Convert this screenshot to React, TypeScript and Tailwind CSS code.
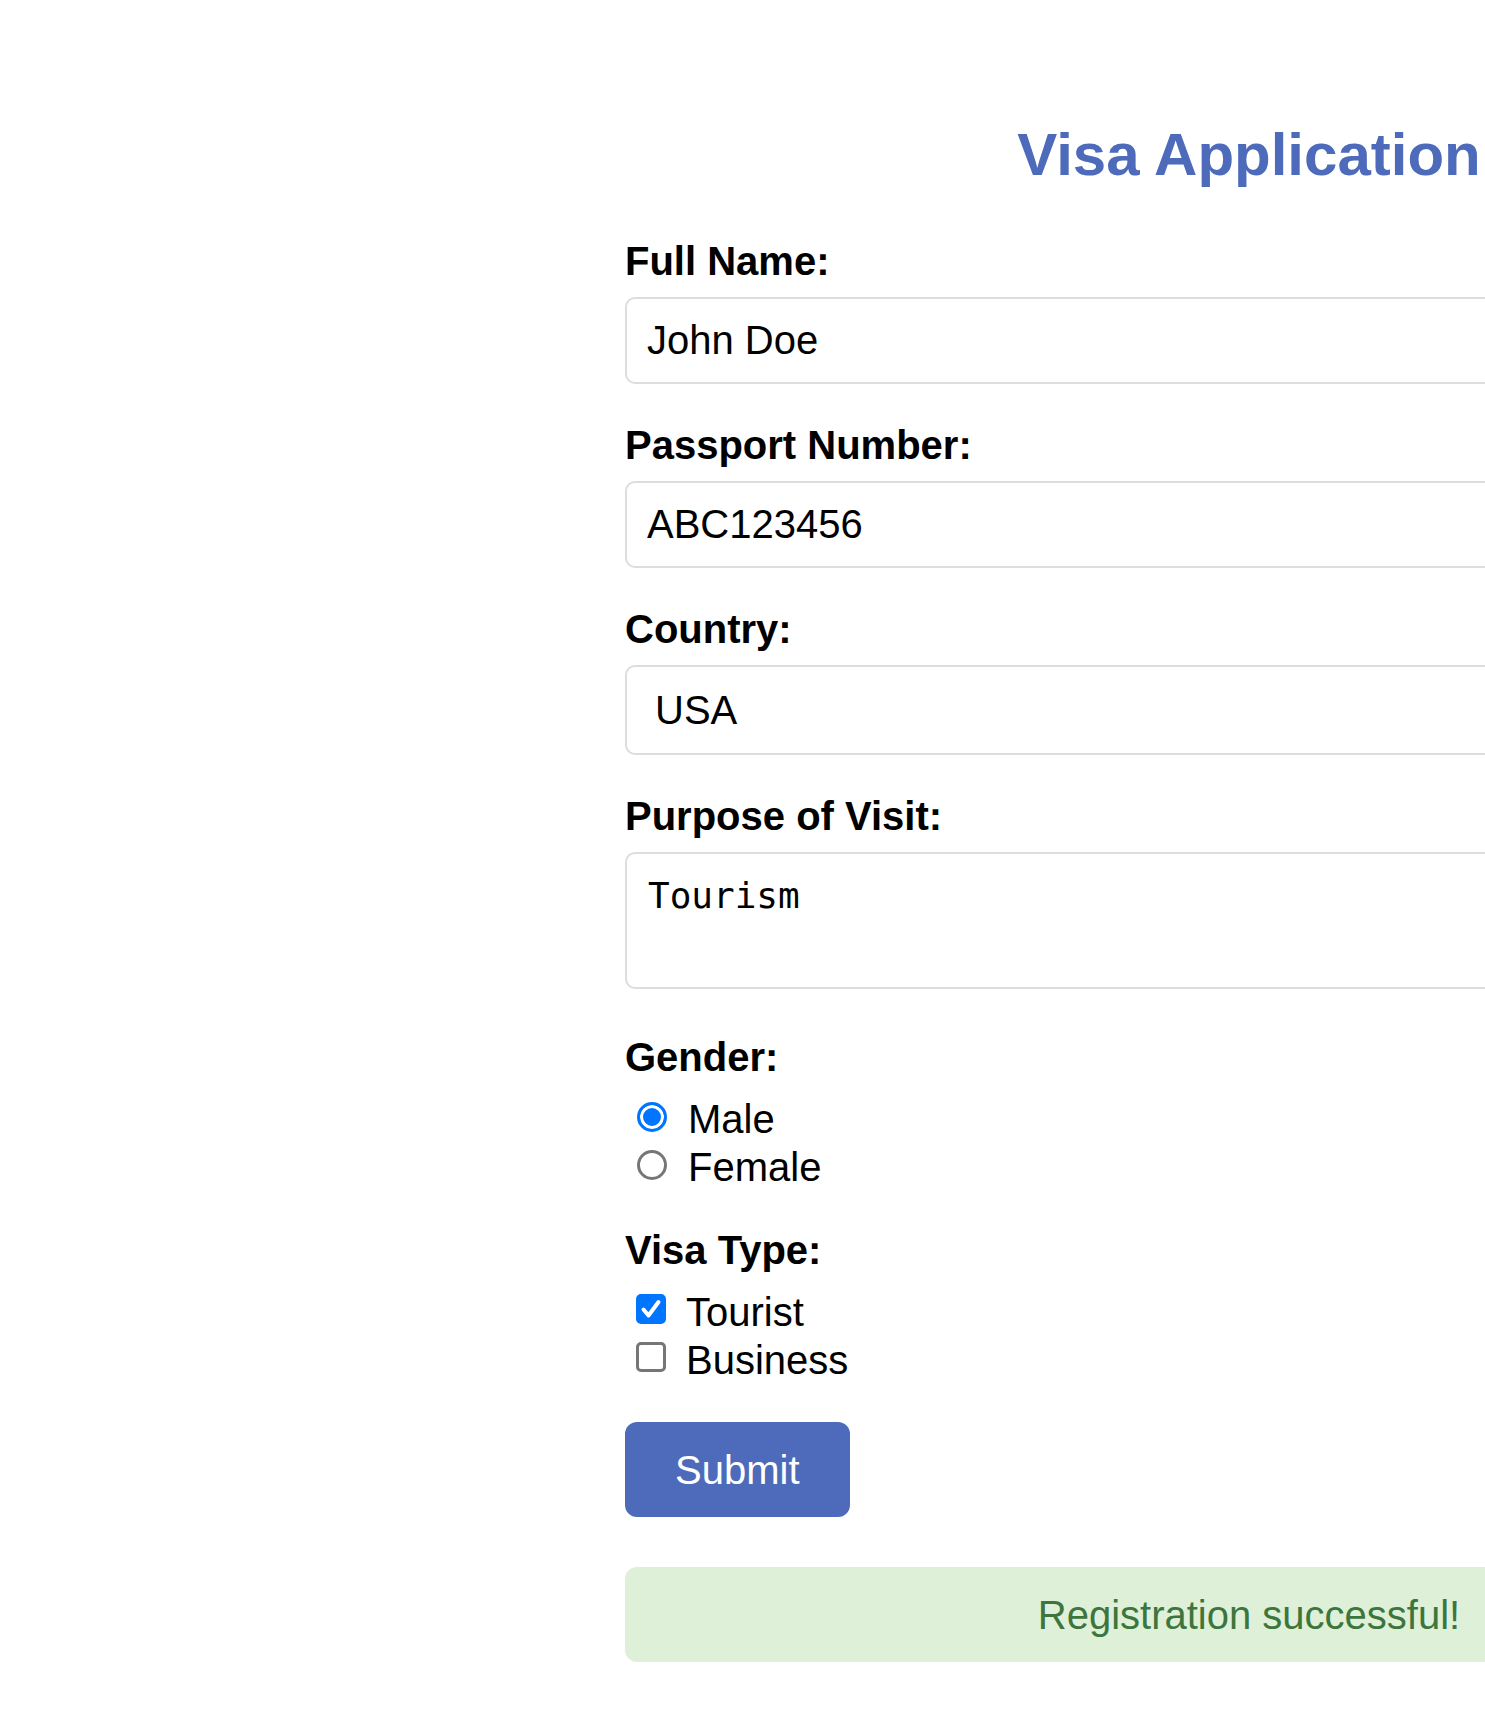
import * as React from "react"

function Radio({ checked, onChange }: { checked: boolean; onChange: () => void }) {
  return (
    <input
      type="radio"
      checked={checked}
      onChange={onChange}
      className="m-0 mt-[7px] ml-[12px] mr-[21px] h-[30px] w-[30px] shrink-0 appearance-none rounded-full border-[3px] border-[#767676] bg-white checked:border-[#0075ff] checked:bg-[#0075ff] checked:shadow-[inset_0_0_0_3px_white]"
    />
  )
}

function Check({ checked, onChange }: { checked: boolean; onChange: () => void }) {
  return (
    <span className="relative mt-[6px] ml-[11px] mr-[20px] h-[30px] w-[30px] shrink-0">
      <input
        type="checkbox"
        checked={checked}
        onChange={onChange}
        className="m-0 block h-[30px] w-[30px] appearance-none rounded-[5px] border-[3px] border-[#767676] bg-white checked:border-[#0075ff] checked:bg-[#0075ff]"
      />
      {checked && (
        <svg className="pointer-events-none absolute left-0 top-0 h-[30px] w-[30px]" viewBox="0 0 30 30">
          <path d="M7.5 15.5 L12.5 21.5 L22.5 8" fill="none" stroke="white" strokeWidth="4" strokeLinecap="round" strokeLinejoin="round" />
        </svg>
      )}
    </span>
  )
}

export default function App() {
  const [gender, setGender] = React.useState("male")
  const [tourist, setTourist] = React.useState(true)
  const [business, setBusiness] = React.useState(false)

  const label = "block text-[40px] font-bold leading-[46px] mb-[13px] text-black"
  const field =
    "block w-full h-[87px] border-2 border-[#dddddd] rounded-[10px] px-[20px] text-[40px] text-black bg-white outline-none"
  const option = "flex h-[48px] items-start text-[40px] leading-[48px] text-black"

  return (
    <div className="w-full overflow-hidden bg-white font-['Liberation_Sans',Arial,sans-serif]">
      <div className="ml-[625px] w-[1248px] shrink-0 pb-[70px]">
        <h1 className="mt-[120px] mb-[49px] text-center text-[60px] font-bold leading-[69px] text-[#4d6bba]">
          Visa Application
        </h1>

        <form className="flex flex-col" onSubmit={(e) => e.preventDefault()}>
          <div className="mb-[38px]">
            <label className={label}>Full Name:</label>
            <input className={field} defaultValue="John Doe" />
          </div>

          <div className="mb-[38px]">
            <label className={label}>Passport Number:</label>
            <input className={field} defaultValue="ABC123456" />
          </div>

          <div className="mb-[38px]">
            <label className={label}>Country:</label>
            <select
              className="block w-full h-[90px] appearance-none border-2 border-[#dddddd] rounded-[10px] pl-[28px] text-[40px] text-black bg-white outline-none"
              defaultValue="USA"
            >
              <option>USA</option>
              <option>Canada</option>
              <option>UK</option>
            </select>
          </div>

          <div className="mb-[45px]">
            <label className={label}>Purpose of Visit:</label>
            <textarea
              className="block w-full h-[137px] resize-none border-2 border-[#dddddd] rounded-[10px] px-[21px] pt-[21px] text-[36px] leading-[42px] text-black bg-white outline-none font-['DejaVu_Sans_Mono',monospace]"
              defaultValue="Tourism"
            />
          </div>

          <div className="mb-[36px]">
            <label className="block text-[40px] font-bold leading-[46px] mb-[15px] text-black">Gender:</label>
            <label className={option}>
              <Radio checked={gender === "male"} onChange={() => setGender("male")} />
              Male
            </label>
            <label className={option}>
              <Radio checked={gender === "female"} onChange={() => setGender("female")} />
              Female
            </label>
          </div>

          <div className="mb-[38px]">
            <label className="block text-[40px] font-bold leading-[46px] mb-[15px] text-black">Visa Type:</label>
            <label className={option}>
              <Check checked={tourist} onChange={() => setTourist(!tourist)} />
              Tourist
            </label>
            <label className={option}>
              <Check checked={business} onChange={() => setBusiness(!business)} />
              Business
            </label>
          </div>

          <div>
            <button
              type="submit"
              className="h-[95px] rounded-[12px] bg-[#4d6bba] px-[50px] text-[40px] leading-[46px] text-white"
            >
              Submit
            </button>
          </div>
        </form>

        <div className="mt-[50px] flex h-[95px] items-center justify-center rounded-[12px] bg-[#dff0d8] text-[40px] leading-[46px] text-[#3c763d]">
          Registration successful!
        </div>
      </div>
    </div>
  )
}
